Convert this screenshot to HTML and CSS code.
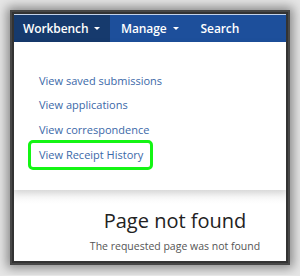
FILE: index.html
```html
<!DOCTYPE html>
<html>

<head>
    <title>Page not found</title>
    <meta charset="UTF-8" />
    <link rel="stylesheet" href="styles.css">
</head>

<body>
    <div class="frame">
        <div class="topnav">
            <span class="nav-item active">Workbench <i class="caret"></i></span>
            <span class="nav-item">Manage <i class="caret"></i></span>
            <span class="nav-item">Search</span>
        </div>
        <div class="menu">
            <a href="#">View saved submissions</a>
            <a href="#">View applications</a>
            <a href="#">View correspondence</a>
            <a href="#" class="hilite">View Receipt History</a>
        </div>
        <div class="notfound">
            <h1>Page not found</h1>
            <p>The requested page was not found</p>
        </div>
    </div>
</body>

</html>
```

FILE: styles.css
```css
body {
    /*灰色底，外框阴影*/
    margin: 0;
    background: #e6e6e6;
    font-family: "Open Sans", "Noto Sans", sans-serif;
}

.frame {
    /*截图外框*/
    margin: 14px;
    width: 272px;
    height: 247px;
    background: #fff;
    overflow: hidden;
    box-shadow: 0 0 0 2px #333, 0 0 0 4px #474747, 0 0 10px 7px #878787;
}

.topnav {
    /*顶部蓝色导航*/
    display: flex;
    height: 27px;
    border-top: 1px solid #c3d2ea;
    background: #1d4f9b;
}

.nav-item {
    display: flex;
    align-items: center;
    gap: 6px;
    padding: 0 11px 0 11px;
    color: #fff;
    font-size: 12px;
    font-weight: 600;
    letter-spacing: -0.1px;
}

.nav-item.active {
    width: 96px;
    box-sizing: border-box;
    padding-left: 9px;
    background: #163a6d;
}

.caret {
    /*下拉小三角*/
    width: 0;
    height: 0;
    border-left: 3px solid transparent;
    border-right: 3px solid transparent;
    border-top: 3px solid #fff;
}

.menu {
    /*下拉菜单*/
    position: relative;
    z-index: 1;
    height: 148px;
    box-sizing: border-box;
    padding: 27px 0 0 25px;
    background: #fff;
    box-shadow: 0 3px 7px rgba(0, 0, 0, 0.13);
}

.menu a {
    display: block;
    line-height: 24.3px;
    font-size: 11px;
    color: #3b68a8;
    text-decoration: none;
}

.menu a.hilite {
    /*绿色高亮框*/
    display: inline-block;
    margin-left: -8px;
    padding: 0 7px 0 8px;
    outline: 3px solid #14f514;
    border-radius: 2px;
}

.notfound {
    padding: 19px 0 0 50px;
    text-align: center;
    background: linear-gradient(#f2f2f2, #fff 14px);
}

.notfound h1 {
    margin: 0;
    font-size: 20px;
    font-weight: 500;
    line-height: 24px;
    color: #222;
}

.notfound p {
    margin: 6px 0 0 0;
    font-size: 10.5px;
    color: #555;
}
```
